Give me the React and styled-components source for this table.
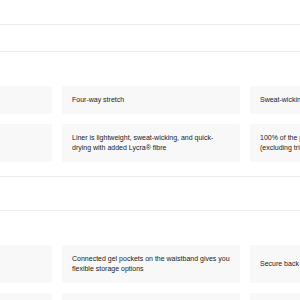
import React from "react";
import styled, { createGlobalStyle } from "styled-components";

const GlobalStyle = createGlobalStyle`
  html, body {
    margin: 0;
    padding: 0;
    background: #ffffff;
    overflow: hidden;
  }
  body {
    font-family: "Liberation Sans", Arial, sans-serif;
  }
`;

// first column sits mostly off screen to the left, its labels never show
const sections = [
  [
    ["", "Four-way stretch", "Sweat-wicking fabric"],
    [
      "",
      "Liner is lightweight, sweat-wicking, and quick-drying with added Lycra® fibre",
      "100% of the polyester in the fabric is recycled (excluding trims)",
    ],
  ],
  [
    [
      "",
      "Connected gel pockets on the waistband gives you flexible storage options",
      "Secure back pocket",
    ],
    ["", "", ""],
  ],
];

export default function App() {
  return (
    <>
      <GlobalStyle />
      <Page>
        <Band $height={24} />
        <Band $height={26} />
        {sections.map((rows, s) => (
          <React.Fragment key={s}>
            {s > 0 && <Band $height={33} />}
            <Section>
              <CardGrid>
                {rows.flat().map((text, i) => (
                  <Card key={i}>{text}</Card>
                ))}
              </CardGrid>
            </Section>
          </React.Fragment>
        ))}
      </Page>
    </>
  );
}

const Page = styled.div`
  display: flex;
  flex-direction: column;
  width: 300px;
  height: 300px;
  overflow: hidden;
`;

const Band = styled.div`
  height: ${(p) => p.$height}px;
  flex-shrink: 0;
  border-bottom: 1px solid #ececec;
`;

const Section = styled.section`
  flex-shrink: 0;
  padding: 34px 0 14px;
  border-bottom: 1px solid #ececec;
`;

const CardGrid = styled.div`
  display: grid;
  grid-template-columns: repeat(3, 178px);
  gap: 10px;
  margin-left: -126px;
`;

const Card = styled.div`
  display: flex;
  align-items: center;
  box-sizing: border-box;
  min-height: 28px;
  padding: 9px 10px;
  background: #f8f8f8;
  border-radius: 2px;
  color: #222222;
  font-size: 7px;
  line-height: 10px;
`;
